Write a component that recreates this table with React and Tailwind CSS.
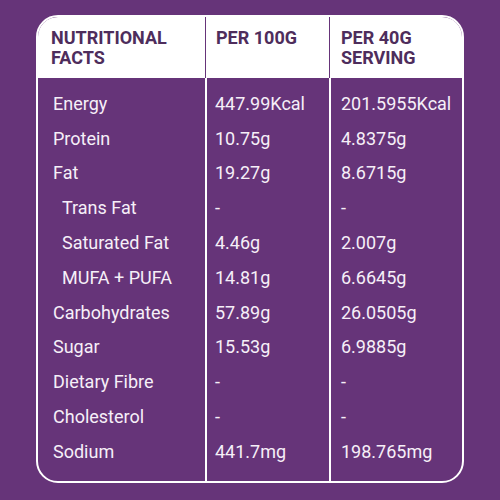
import React from 'react';

const rows = [
  { label: 'Energy', a: '447.99Kcal', b: '201.5955Kcal' },
  { label: 'Protein', a: '10.75g', b: '4.8375g' },
  { label: 'Fat', a: '19.27g', b: '8.6715g' },
  { label: 'Trans Fat', a: '-', b: '-', sub: true },
  { label: 'Saturated Fat', a: '4.46g', b: '2.007g', sub: true },
  { label: 'MUFA + PUFA', a: '14.81g', b: '6.6645g', sub: true },
  { label: 'Carbohydrates', a: '57.89g', b: '26.0505g' },
  { label: 'Sugar', a: '15.53g', b: '6.9885g' },
  { label: 'Dietary Fibre', a: '-', b: '-' },
  { label: 'Cholesterol', a: '-', b: '-' },
  { label: 'Sodium', a: '441.7mg', b: '198.765mg' },
];

export default function App() {
  return (
    <div className="w-[500px] h-[500px] bg-[#663479] pt-[15px] pl-[36px]" style={{ fontFamily: 'Roboto, "Liberation Sans", sans-serif' }}>
      <div className="w-[428px] h-[468px] border-2 border-white rounded-[22px] overflow-hidden flex flex-col">
        {/* header */}
        <div className="grid grid-cols-[167px_124px_133px] h-[61px] bg-white text-[#4e2d5c] font-bold text-[18px] leading-[20px] uppercase">
          <div className="pl-[13px] pt-[11px]">Nutritional<br />Facts</div>
          <div className="pl-[10px] pt-[11px] border-l border-[#663479]">Per 100G</div>
          <div className="pl-[11px] pt-[11px] border-l border-[#663479]">Per 40G<br />Serving</div>
        </div>
        {/* body */}
        <div className="grid grid-cols-[167px_124px_133px] flex-1 text-[#f6eff8] text-[18px]">
          <div className="flex flex-col pt-[8px]">
            {rows.map((r) => (
              <div key={r.label} className={`h-[34.8px] flex items-center ${r.sub ? 'pl-[24px]' : 'pl-[15px]'}`}>{r.label}</div>
            ))}
          </div>
          <div className="flex flex-col pt-[8px] border-l-2 border-white">
            {rows.map((r) => (
              <div key={r.label} className="h-[34.8px] flex items-center pl-[8px]">{r.a}</div>
            ))}
          </div>
          <div className="flex flex-col pt-[8px] border-l-2 border-white">
            {rows.map((r) => (
              <div key={r.label} className="h-[34.8px] flex items-center pl-[10px]">{r.b}</div>
            ))}
          </div>
        </div>
      </div>
    </div>
  );
}
